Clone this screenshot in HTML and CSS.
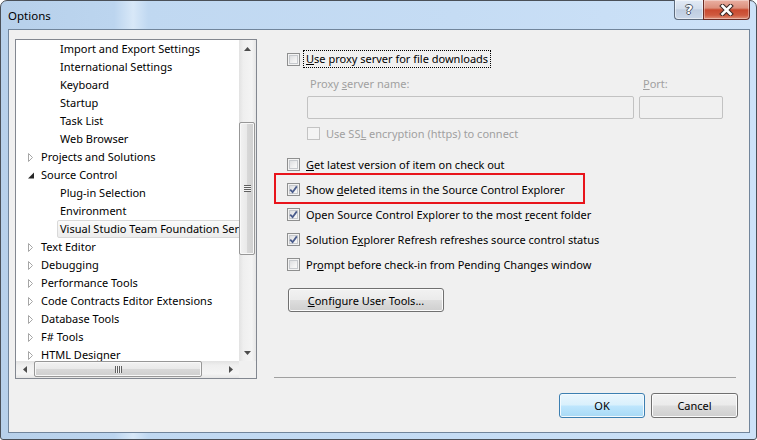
FILE: index.html
```html
<!DOCTYPE html>
<html lang="en">
<head>
  <meta charset="UTF-8">
  <title>Options</title>
  <link rel="stylesheet" href="styles.css">
</head>
<body>
  <div class="window">
    <div class="titlebar">
      <span class="title">Options</span>
      <div class="caption">
        <div class="cap help"><span>?</span></div>
        <div class="cap close">
          <svg width="15" height="12" viewBox="0 0 15 12">
            <path d="M3.5 2 L11.5 10 M11.5 2 L3.5 10" stroke="#3d2a27" stroke-width="4.6" stroke-linecap="square" fill="none"/>
            <path d="M3.5 2 L11.5 10 M11.5 2 L3.5 10" stroke="#fff" stroke-width="2.6" stroke-linecap="square" fill="none"/>
          </svg>
        </div>
      </div>
    </div>

    <div class="client">
      <!-- options tree -->
      <div class="tree">
        <div class="nodes">
          <div class="node child"><span class="lbl">Import and Export Settings</span></div>
          <div class="node child"><span class="lbl">International Settings</span></div>
          <div class="node child"><span class="lbl">Keyboard</span></div>
          <div class="node child"><span class="lbl">Startup</span></div>
          <div class="node child"><span class="lbl">Task List</span></div>
          <div class="node child"><span class="lbl">Web Browser</span></div>
          <div class="node top"><span class="exp"><svg width="6" height="9" viewBox="0 0 6 9"><path d="M0.5 0.5 L4.5 4.5 L0.5 8.5 Z" fill="#fff" stroke="#a6a6a6"/></svg></span><span class="lbl">Projects and Solutions</span></div>
          <div class="node top"><span class="exp"><svg width="7" height="9" viewBox="0 0 7 9"><path d="M6 1.5 L6 7.5 L0 7.5 Z" fill="#262626"/></svg></span><span class="lbl">Source Control</span></div>
          <div class="node child"><span class="lbl">Plug-in Selection</span></div>
          <div class="node child"><span class="lbl">Environment</span></div>
          <div class="node child"><span class="lbl selected">Visual Studio Team Foundation Server</span></div>
          <div class="node top"><span class="exp"><svg width="6" height="9" viewBox="0 0 6 9"><path d="M0.5 0.5 L4.5 4.5 L0.5 8.5 Z" fill="#fff" stroke="#a6a6a6"/></svg></span><span class="lbl">Text Editor</span></div>
          <div class="node top"><span class="exp"><svg width="6" height="9" viewBox="0 0 6 9"><path d="M0.5 0.5 L4.5 4.5 L0.5 8.5 Z" fill="#fff" stroke="#a6a6a6"/></svg></span><span class="lbl">Debugging</span></div>
          <div class="node top"><span class="exp"><svg width="6" height="9" viewBox="0 0 6 9"><path d="M0.5 0.5 L4.5 4.5 L0.5 8.5 Z" fill="#fff" stroke="#a6a6a6"/></svg></span><span class="lbl">Performance Tools</span></div>
          <div class="node top"><span class="exp"><svg width="6" height="9" viewBox="0 0 6 9"><path d="M0.5 0.5 L4.5 4.5 L0.5 8.5 Z" fill="#fff" stroke="#a6a6a6"/></svg></span><span class="lbl">Code Contracts Editor Extensions</span></div>
          <div class="node top"><span class="exp"><svg width="6" height="9" viewBox="0 0 6 9"><path d="M0.5 0.5 L4.5 4.5 L0.5 8.5 Z" fill="#fff" stroke="#a6a6a6"/></svg></span><span class="lbl">Database Tools</span></div>
          <div class="node top"><span class="exp"><svg width="6" height="9" viewBox="0 0 6 9"><path d="M0.5 0.5 L4.5 4.5 L0.5 8.5 Z" fill="#fff" stroke="#a6a6a6"/></svg></span><span class="lbl">F# Tools</span></div>
          <div class="node top"><span class="exp"><svg width="6" height="9" viewBox="0 0 6 9"><path d="M0.5 0.5 L4.5 4.5 L0.5 8.5 Z" fill="#fff" stroke="#a6a6a6"/></svg></span><span class="lbl">HTML Designer</span></div>
        </div>

        <div class="vscroll">
          <div class="sb-btn"><svg width="7" height="4" viewBox="0 0 7 4"><path d="M3.5 0 L7 4 L0 4 Z" fill="#4d4d4d"/></svg></div>
          <div class="sb-track">
            <div class="vthumb"><span class="vgrip"></span></div>
          </div>
          <div class="sb-btn"><svg width="7" height="4" viewBox="0 0 7 4"><path d="M0 0 L7 0 L3.5 4 Z" fill="#4d4d4d"/></svg></div>
        </div>

        <div class="hscroll">
          <div class="sb-btn"><svg width="4" height="7" viewBox="0 0 4 7"><path d="M4 0 L4 7 L0 3.5 Z" fill="#4d4d4d"/></svg></div>
          <div class="sb-track">
            <div class="hthumb"><span class="hgrip"></span></div>
          </div>
          <div class="sb-btn"><svg width="4" height="7" viewBox="0 0 4 7"><path d="M0 0 L4 3.5 L0 7 Z" fill="#4d4d4d"/></svg></div>
        </div>
        <div class="corner"></div>
      </div>

      <!-- source control page -->
      <div class="pane">
        <div class="row first">
          <span class="cb"></span>
          <span class="focus"><u>U</u>se proxy server for file downloads</span>
        </div>

        <div class="proxy-labels">
          <span class="name-lbl">Proxy <u>s</u>erver name:</span>
          <span class="port-lbl"><u>P</u>ort:</span>
        </div>
        <div class="proxy-inputs">
          <span class="field name"></span>
          <span class="field port"></span>
        </div>
        <div class="row ssl disabled">
          <span class="cb"></span>
          <span class="txt">Use SS<u>L</u> encryption (https) to connect</span>
        </div>

        <div class="checks">
          <div class="row check">
            <span class="cb"></span>
            <span class="txt"><u>G</u>et latest version of item on check out</span>
          </div>
          <div class="row check marked">
            <span class="cb"><svg width="11" height="11" viewBox="0 0 11 11"><path d="M2.2 5.6 L4.6 8.2 L8.8 2.4" stroke="#4a5c8c" stroke-width="1.8" fill="none"/></svg></span>
            <span class="txt">Show <u>d</u>eleted items in the Source Control Explorer</span>
            <span class="hl"></span>
          </div>
          <div class="row check">
            <span class="cb"><svg width="11" height="11" viewBox="0 0 11 11"><path d="M2.2 5.6 L4.6 8.2 L8.8 2.4" stroke="#4a5c8c" stroke-width="1.8" fill="none"/></svg></span>
            <span class="txt">Open Source Control Explorer to the most <u>r</u>ecent folder</span>
          </div>
          <div class="row check">
            <span class="cb"><svg width="11" height="11" viewBox="0 0 11 11"><path d="M2.2 5.6 L4.6 8.2 L8.8 2.4" stroke="#4a5c8c" stroke-width="1.8" fill="none"/></svg></span>
            <span class="txt">Solution E<u>x</u>plorer Refresh refreshes source control status</span>
          </div>
          <div class="row check">
            <span class="cb"></span>
            <span class="txt">Pr<u>o</u>mpt before check-in from Pending Changes window</span>
          </div>
        </div>

        <div class="btn configure"><u>C</u>onfigure User Tools...</div>

        <div class="separator"></div>

        <div class="actions">
          <div class="btn default">OK</div>
          <div class="btn cancel">Cancel</div>
        </div>
      </div>
    </div>
  </div>
</body>
</html>
```

FILE: styles.css
```css
* {
  margin: 0;
  padding: 0;
  box-sizing: border-box;
}

body {
  width: 757px;
  height: 440px;
  overflow: hidden;
  background: #fff;
  font-family: "Noto Sans", "Liberation Sans", sans-serif;
  font-size: 11px;
  color: #000;
}

u {
  text-underline-offset: 1px;
}

/* window frame */
.window {
  width: 757px;
  height: 440px;
  border: 1px solid #4a5058;
  border-radius: 7px 7px 3px 3px;
  background: linear-gradient(to right, #b7d0ea 0, #bcd5ef 15%, #d8e8f8 17.5%, #c0d8f1 19.5%, #c5dcf4 60%, #cde2f8 100%);
  display: flex;
  flex-direction: column;
}

.titlebar {
  height: 28px;
  display: flex;
  align-items: flex-start;
  padding-left: 7px;
}

.title {
  line-height: 29px;
  font-size: 11.5px;
  color: #000;
}

.caption {
  display: flex;
  margin-left: auto;
  margin-right: 6px;
  margin-top: -1px;
}

.cap {
  height: 20px;
  border: 1px solid #5d6b7d;
  border-top: none;
  display: flex;
  align-items: center;
  justify-content: center;
}

.cap.help {
  width: 29px;
  border-right: none;
  border-radius: 0 0 0 4px;
  background: linear-gradient(#e2eaf5, #d3deec 45%, #bfcde0 52%, #cad8ea);
  box-shadow: inset 0 0 0 1px rgba(255, 255, 255, 0.5);
}

.cap.help span {
  font-family: "DejaVu Sans", sans-serif;
  font-weight: bold;
  font-size: 13px;
  line-height: 13px;
  color: #fff;
  text-shadow: -1px 0 #4b5563, 1px 0 #4b5563, 0 -1px #4b5563, 0 1px #4b5563;
}

.cap.close {
  width: 47px;
  border-color: #6a2b24;
  border-radius: 0 0 4px 0;
  background: linear-gradient(#eab0a3, #dc8f7c 42%, #c9492f 52%, #cf5a3f 80%, #e0937c);
  box-shadow: inset 0 0 0 1px rgba(255, 255, 255, 0.35);
}

.client {
  flex: 1;
  margin: 0 6px 6px 7px;
  border: 1px solid #71859b;
  background: #f0f0f0;
  display: flex;
  padding: 9px 0 0 6px;
}

/* tree view */
.tree {
  width: 242px;
  height: 340px;
  border: 1px solid #828790;
  background: #fff;
  display: grid;
  grid-template-columns: 223px 17px;
  grid-template-rows: 321px 17px;
}

.nodes {
  overflow: hidden;
}

.node {
  height: 18px;
  display: flex;
  align-items: center;
  white-space: nowrap;
}

.node.child {
  padding-left: 41px;
}

.node.top {
  padding-left: 8px;
}

.exp {
  width: 14px;
  height: 18px;
  display: flex;
  align-items: center;
  padding-left: 4px;
  flex: none;
}

.lbl {
  line-height: 16px;
  border: 1px solid transparent;
  padding: 0 2px;
  border-radius: 2px;
}

.lbl.selected {
  border-color: #d9d9d9;
  background: linear-gradient(#fafafa, #ececec);
}

.vscroll {
  display: flex;
  flex-direction: column;
  background: linear-gradient(to right, #e2e2e2, #efefef 25%, #f4f4f4 75%, #e6e6e6);
}

.hscroll {
  display: flex;
  background: linear-gradient(#e2e2e2, #efefef 25%, #f4f4f4 75%, #e6e6e6);
}

.sb-btn {
  width: 17px;
  height: 17px;
  flex: none;
  display: flex;
  align-items: center;
  justify-content: center;
}

.sb-track {
  flex: 1;
  display: flex;
}

.vscroll .sb-track {
  flex-direction: column;
}

.vthumb {
  margin-top: 65px;
  width: 16px;
  height: 133px;
  border: 1px solid #979797;
  border-radius: 2px;
  background: linear-gradient(to right, #f2f2f2, #e9e9e9 50%, #d8d8d8 51%, #cfcfcf);
  box-shadow: inset 0 0 0 1px #f8f8f8;
  display: flex;
  align-items: center;
  justify-content: center;
}

.vgrip {
  width: 7px;
  height: 7px;
  background: repeating-linear-gradient(#606060 0 1px, #f4f4f4 1px 2px);
}

.hthumb {
  margin-left: 1px;
  width: 168px;
  height: 16px;
  border: 1px solid #979797;
  border-radius: 2px;
  background: linear-gradient(#f2f2f2, #e9e9e9 50%, #d8d8d8 51%, #cfcfcf);
  box-shadow: inset 0 0 0 1px #f8f8f8;
  display: flex;
  align-items: center;
  justify-content: center;
}

.hgrip {
  width: 7px;
  height: 7px;
  background: repeating-linear-gradient(to right, #606060 0 1px, #f4f4f4 1px 2px);
}

.corner {
  background: #f0f0f0;
}

/* right page */
.pane {
  flex: 1;
  margin-left: 17px;
  padding-right: 11px;
  display: flex;
  flex-direction: column;
}

.row {
  display: flex;
  align-items: center;
  white-space: nowrap;
}

.row.first {
  margin-top: 11px;
  height: 18px;
  padding-left: 13px;
}

.focus {
  margin-left: 3px;
  border: 1px dotted #000;
  padding: 0 2px;
  line-height: 16px;
}

.cb {
  width: 13px;
  height: 13px;
  flex: none;
  border: 1px solid #8e8f8f;
  background: linear-gradient(135deg, #d4d6d9, #f2f2f2 60%, #fdfdfd);
  box-shadow: inset 0 0 0 1px #f3f3f3, inset 0 0 0 2px #c6c9cd;
  display: flex;
  align-items: center;
  justify-content: center;
}

.txt {
  margin-left: 6px;
}

.proxy-labels {
  margin-top: 8px;
  height: 15px;
  display: flex;
  align-items: center;
  padding-left: 33px;
  gap: 5px;
  color: #a0a0a0;
}

.name-lbl {
  width: 327px;
  padding-left: 3px;
}

.port-lbl {
  padding-left: 4px;
}

.proxy-inputs {
  margin-top: 5px;
  display: flex;
  padding-left: 33px;
  gap: 5px;
}

.field {
  height: 23px;
  border: 1px solid #c2c2c2;
  border-radius: 2px;
  background: #f0f0f0;
}

.field.name {
  width: 327px;
}

.field.port {
  width: 84px;
}

.row.ssl {
  margin-top: 6px;
  height: 16px;
  padding-left: 33px;
}

.disabled {
  color: #a0a0a0;
}

.disabled .cb {
  border-color: #c3c3c3;
  background: #f4f4f4;
  box-shadow: none;
}

.checks {
  margin-top: 11px;
}

.row.check {
  height: 25px;
  padding-left: 13px;
  position: relative;
}

.hl {
  position: absolute;
  left: 0;
  top: -4px;
  width: 311px;
  height: 31px;
  border: 2px solid #e8141b;
}

.btn {
  height: 24px;
  border: 1px solid #707070;
  border-radius: 3px;
  background: linear-gradient(#f2f2f2, #ebebeb 48%, #dddddd 52%, #cfcfcf);
  box-shadow: inset 0 0 0 1px #fbfbfb;
  display: flex;
  align-items: center;
  justify-content: center;
  white-space: nowrap;
}

.btn.configure {
  margin-top: 11px;
  margin-left: 14px;
  width: 156px;
}

.separator {
  margin-top: 65px;
  margin-right: 2px;
  height: 1px;
  background: #a0a0a0;
}

.actions {
  margin-top: 15px;
  display: flex;
  justify-content: flex-end;
  gap: 6px;
}

.actions .btn {
  height: 25px;
}

.btn.default {
  width: 86px;
  border-color: #3c7fb1;
  background: linear-gradient(#eaf6fd, #d9f0fc 48%, #bee6fd 52%, #a7d9f5);
  box-shadow: inset 0 0 0 1px #f3fafe;
}

.btn.cancel {
  width: 87px;
}
```
